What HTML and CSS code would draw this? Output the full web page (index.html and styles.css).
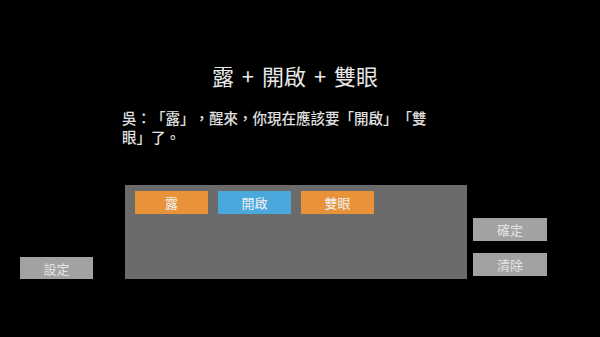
FILE: index.html
```html
<!DOCTYPE html>
<html lang="zh-TW">
<head>
<meta charset="utf-8">
<link rel="stylesheet" href="styles.css">
</head>
<body>
<div class="screen">
  <h1 class="title">露 + 開啟 + 雙眼</h1>
  <p class="dialog">吳：「露」，醒來，你現在應該要「開啟」「雙眼」了。</p>
  <div class="bottom">
    <button class="btn gray settings">設定</button>
    <div class="panel">
      <span class="tile orange">露</span>
      <span class="tile blue">開啟</span>
      <span class="tile orange">雙眼</span>
    </div>
    <div class="actions">
      <button class="btn gray">確定</button>
      <button class="btn gray">清除</button>
    </div>
  </div>
</div>
</body>
</html>
```
FILE: styles.css
```css
html, body {
  margin: 0;
  padding: 0;
  background: #000;
}
body {
  width: 600px;
  height: 337px;
  overflow: hidden;
  font-family: "Noto Sans CJK TC", "Noto Sans", sans-serif;
  color: #e6e6e6;
  text-spacing-trim: space-all;
}
.screen {
  padding-top: 64px;
}
.title {
  margin: 0;
  font-size: 22px;
  line-height: 22px;
  font-weight: 400;
  text-align: center;
  padding-right: 10px;
  word-spacing: 3px;
  color: #e8e8e8;
}
.dialog {
  margin: 22px 0 0 122px;
  width: 312px;
  font-size: 14.5px;
  line-height: 19px;
  font-weight: 500;
  color: #e0e0e0;
}
.bottom {
  display: flex;
  align-items: flex-end;
  margin-top: 39px;
  padding-left: 20px;
}
.btn {
  border: 0;
  margin: 0;
  padding: 0;
  font-family: inherit;
  font-size: 13px;
  color: #e4e4e4;
  width: 74px;
  height: 23px;
  line-height: 23px;
}
.gray {
  background: #a2a2a2;
}
.settings {
  width: 73px;
  height: 22px;
}
.panel {
  margin-left: 32px;
  width: 342px;
  height: 94px;
  box-sizing: border-box;
  background: #6b6b6b;
  padding: 6px 10px;
  display: flex;
  align-items: flex-start;
  gap: 10px;
}
.tile {
  width: 73px;
  height: 23px;
  line-height: 23px;
  text-align: center;
  font-size: 13px;
  color: #f0f0f0;
}
.orange {
  background: #e8923a;
}
.blue {
  background: #4aa8dc;
}
.actions {
  margin-left: 6px;
  padding-bottom: 3px;
  display: flex;
  flex-direction: column;
  gap: 12px;
}
```
